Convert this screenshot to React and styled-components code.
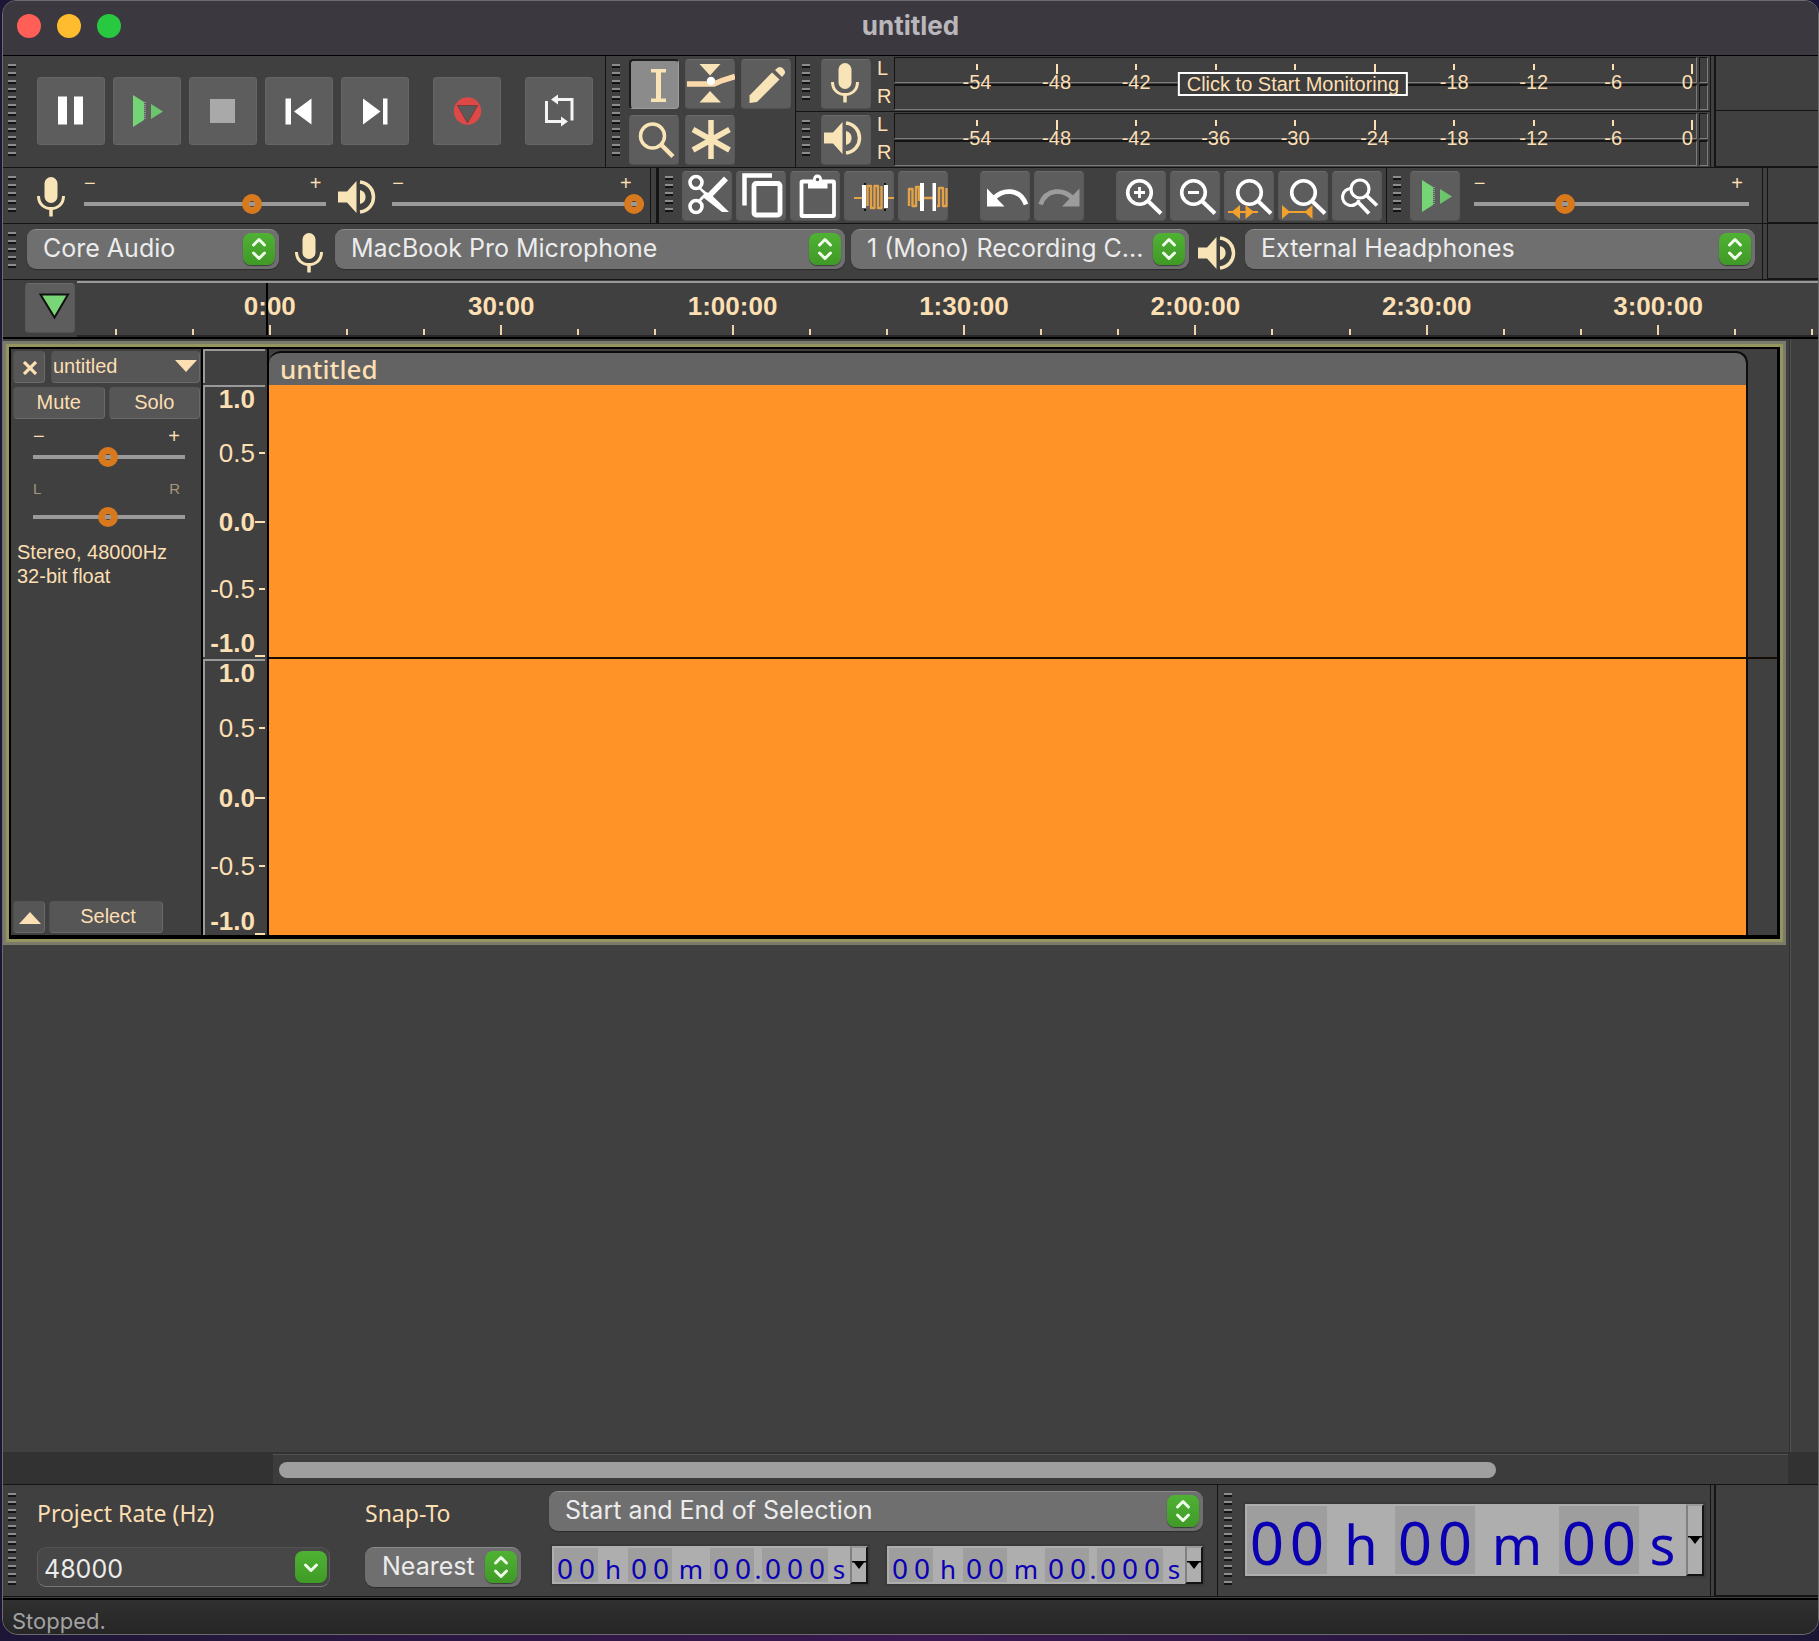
import { useState } from "react";
import styled, { createGlobalStyle, css } from "styled-components";

const GlobalStyle = createGlobalStyle`
  * {
    box-sizing: border-box;
  }
  body {
    margin: 0;
    background: linear-gradient(90deg, #1d1636, #3a1850 50%, #1c1636);
    font-family: "Liberation Sans", Arial, sans-serif;
    font-size: 20px;
    color: #fcdfb2;
  }
  button {
    padding: 0;
    font: inherit;
    color: inherit;
  }
`;

const SYSTEM_FONT = `Inter, "Liberation Sans", sans-serif`;
const HUMANIST_FONT = `"Noto Sans", "Open Sans", sans-serif`;

/* ---------- window ---------- */

const Window = styled.div`
  display: flex;
  flex-direction: column;
  min-height: calc(100vh - 6px);
  margin: 0 0 6px 2px;
  border: 1px solid #6c6b6e;
  border-radius: 14px 14px 16px 16px;
  overflow: hidden;
  background: #404040;
`;

const TitleBar = styled.header`
  display: grid;
  grid-template-columns: 1fr auto 1fr;
  align-items: center;
  height: 55px;
  padding: 0 14px 4px;
  background: #3b383f;
  border-bottom: 1px solid #000;
`;

const Title = styled.h1`
  margin: 0;
  font-family: ${SYSTEM_FONT};
  font-size: 26px;
  line-height: 28px;
  font-weight: 700;
  color: #b9b7bb;
`;

const Lights = styled.div`
  display: flex;
  gap: 16px;
`;

const Light = styled.button`
  width: 24px;
  height: 24px;
  border: 0;
  border-radius: 50%;
  background: ${(p) => p.$color};
`;

/* ---------- toolbars ---------- */

const ToolbarRow = styled.div`
  display: flex;
  height: ${(p) => (p.$tall ? 112 : 56)}px;
  border-bottom: 1px solid #141414;
`;

const Section = styled.section`
  display: flex;
  align-items: flex-start;
  flex: ${(p) => p.$flex || "none"};
  min-width: 0;
  padding: ${(p) => p.$pad};
  border-right: 1px solid #141414;
`;

const Splitter = styled.div`
  flex: none;
  width: ${(p) => p.$width || 5}px;
  border-right: ${(p) => p.$line || 1}px solid #141414;
`;

const Filler = styled.div`
  flex: none;
  width: ${(p) => p.$width}px;
  border-bottom: 1px solid #141414;
`;

const SplitFiller = styled(Filler)`
  display: grid;
  grid-template-rows: 1fr 1fr;

  &::before {
    content: "";
    border-bottom: 1px solid #141414;
  }
`;

const Grabber = styled.div`
  flex: none;
  width: 8px;
  height: ${(p) => (p.$tall ? 92 : 36)}px;
  margin: 8px ${(p) => p.$gap}px 0 0;
  background: repeating-linear-gradient(
    #8c8c8c 0 2px,
    #141414 2px 4px,
    transparent 4px 8px
  );
`;

const TransportButton = styled.button`
  width: 68px;
  height: 68px;
  border: 1px solid #656565;
  border-radius: 3px;
  background: #5d5d5d;

  svg {
    display: block;
    margin: -1px;
  }
`;

const Transport = styled.div`
  display: flex;
  gap: 8px;
  padding-top: 21px;
`;

const Spacer = styled.span`
  width: ${(p) => p.$width}px;
`;

const ToolButton = styled.button`
  flex: none;
  width: 50px;
  height: 50px;
  border: 1px solid;
  border-color: #6a6a6a #585858 #525252 #5a5a5a;
  border-radius: 4px;
  background: #5d5d5d;

  svg {
    display: block;
    margin: -1px;
  }

  ${(p) =>
    p.$pressed &&
    css`
      border-width: 2px 1px 1px 2px;
      border-color: #1c1c1c #9a9a9a #9a9a9a #1c1c1c;
      background: #8b8b8b;

      svg {
        margin: -2px;
      }
    `}
`;

const ToolGrid = styled.div`
  display: grid;
  grid-template-columns: repeat(3, 50px);
  gap: 6px;
  padding-top: 3px;
`;

const ButtonStrip = styled.div`
  display: flex;
  gap: 4px;
  padding-top: 3px;
`;

const IconSlot = styled.span`
  flex: none;
  display: flex;
  align-items: center;
  height: 40px;
  margin: 9px ${(p) => p.$right}px 0 ${(p) => p.$left}px;
`;

/* ---------- meters ---------- */

const Meters = styled.div`
  display: flex;
  flex-direction: column;
  flex: 1;
  min-width: 0;
  border-right: 1px solid #141414;
`;

const MeterRow = styled.div`
  display: flex;
  height: 56px;
  padding: 0 2px 0 6px;
  border-bottom: 1px solid #141414;

  &:last-child {
    height: 55px;
    border-bottom: 0;
  }

  ${ToolButton} {
    margin-top: 3px;
  }
`;

const ChannelNames = styled.div`
  display: grid;
  grid-template-rows: 24px 24px;
  gap: 4px;
  width: 23px;
  padding-left: 6px;
  line-height: 24px;
`;

const MeterBox = styled.div`
  position: relative;
  flex: 1;
  display: grid;
  grid-template-columns: 1fr 9px;
  grid-template-rows: 26px 26px;
  gap: 1px 2px;
  padding-top: 1px;
`;

const MeterBar = styled.div`
  border: 1px solid;
  border-color: #141414 #7c7c7c #7c7c7c #141414;
  border-top-width: ${(p) => (p.$lower ? 2 : 1)}px;
`;

const Mark = styled.div`
  position: absolute;
  top: 8px;
  left: ${(p) => p.$at}%;
  display: flex;
  flex-direction: column;
  align-items: ${(p) => (p.$last ? "flex-end" : "center")};
  width: 0;
  line-height: 20px;

  &::before {
    content: "";
    flex: none;
    width: 2px;
    height: ${(p) => (p.$long ? 10 : 6)}px;
    margin-bottom: ${(p) => (p.$long ? -2 : 2)}px;
    background: #fcdfb2;
  }
`;

const MonitorButton = styled.button`
  position: absolute;
  top: 16px;
  left: 49%;
  height: 24px;
  padding: 0 7px;
  transform: translateX(-50%);
  border: 2px solid #fff;
  background: #3d3d3d;
  line-height: 20px;
  white-space: nowrap;
`;

/* ---------- sliders ---------- */

const SliderBox = styled.div`
  flex: ${(p) => p.$grow || 1} 1 0;
  min-width: 0;
  padding-top: ${(p) => p.$top || 0}px;
`;

const SliderEnds = styled.div`
  display: flex;
  justify-content: space-between;
  height: ${(p) => (p.$pan ? 27 : 20)}px;
  padding-right: ${(p) => p.$inset || 5}px;
  font-size: ${(p) => (p.$pan ? 15 : 20)}px;
  line-height: 20px;
  color: ${(p) => (p.$pan ? "#a8967c" : "inherit")};
`;

const Range = styled.input`
  appearance: none;
  display: block;
  width: 100%;
  height: 22px;
  margin: 0;
  background: transparent;

  &::-webkit-slider-runnable-track {
    height: 4px;
    background: #9a9a9a;
  }

  &::-webkit-slider-thumb {
    appearance: none;
    width: 20px;
    height: 20px;
    margin-top: -8px;
    border: 7px solid #d9791d;
    border-radius: 50%;
    background: transparent;
  }
`;

/* ---------- selects ---------- */

const SelectBox = styled.div`
  position: relative;
  flex: ${(p) => p.$flex || "none"};
  min-width: 0;
  height: 40px;
`;

const NativeSelect = styled.select`
  appearance: none;
  width: 100%;
  height: 40px;
  padding: 0 44px 3px ${(p) => p.$indent || 16}px;
  border: 0;
  border-top: 1px solid #8c8c8c;
  border-radius: 9px;
  background: #6f6f6f;
  box-shadow: 0 1px 1px #2c2c2c;
  font-family: ${SYSTEM_FONT};
  font-size: 25px;
  color: #ececec;
`;

const GreenBadge = styled.span`
  position: absolute;
  top: 4px;
  right: ${(p) => p.$right || 4}px;
  width: 32px;
  height: 32px;
  border-radius: 8px;
  background: linear-gradient(#4fb234, #3f9a26);
  box-shadow: 0 1px 1px #3b3b3b;
  pointer-events: none;

  svg {
    display: block;
  }
`;

/* ---------- timeline ---------- */

const Timeline = styled.div`
  display: flex;
  height: 59px;
  padding-top: 1px;
  border-bottom: 2px solid #000;
`;

const PinCell = styled.div`
  flex: none;
  width: 74px;
  padding: 2px 0 0 22px;
`;

const Ticks = styled.div`
  flex: 1;
  display: flex;
  min-width: 0;
  overflow: hidden;
  border-top: 2px solid #9a9a9a;
  border-bottom: 2px solid #262626;
`;

const TickCell = styled.div`
  position: relative;
  flex: 0 0 4.43%;
  display: flex;
  flex-direction: column;
  align-items: center;
  min-width: 0;
  padding-top: 8px;
  font-size: 26px;
  font-weight: 700;
  line-height: 30px;
  white-space: nowrap;

  &::after {
    content: "";
    width: 2px;
    height: ${(p) => (p.$major ? 10 : 6)}px;
    margin-top: auto;
    background: #f0d5aa;
  }
`;

const Playhead = styled.span`
  position: absolute;
  top: 0;
  bottom: 0;
  left: calc(50% - 4px);
  width: 2px;
  background: #000;
`;

/* ---------- track ---------- */

const Workspace = styled.main`
  flex: 1;
  display: flex;
`;

const TrackList = styled.div`
  flex: 1;
  min-width: 0;
  padding: 2px 4px 24px 0;
`;

const VerticalScroll = styled.div`
  width: 28px;
  border-left: 1px solid #515151;
  box-shadow: -1px 0 0 #303030;
  background: #3e3e3e;
`;

const Track = styled.article`
  padding: 3px;
  border: 3px solid #7b7b6c;
  background: #95955f;
`;

const TrackBody = styled.div`
  display: flex;
  border: 2px solid #000;
  border-width: 2px 3px 4px 2px;
  background: #404040;
`;

const TrackPanel = styled.div`
  display: flex;
  flex-direction: column;
  gap: 4px;
  width: 192px;
  padding: 2px 1px 2px 2px;
  border-right: 2px solid #000;
`;

const PanelRow = styled.div`
  display: flex;
  gap: ${(p) => p.$gap || 4}px;
`;

const PanelButton = styled.button`
  display: flex;
  align-items: center;
  justify-content: ${(p) => (p.$split ? "space-between" : "center")};
  flex: ${(p) => (p.$width ? "none" : "1")};
  width: ${(p) => (p.$width ? `${p.$width}px` : "auto")};
  height: 32px;
  padding: ${(p) => p.$pad || "0 0 2px"};
  border: 1px solid;
  border-color: #565656 #696969 #696969 #505050;
  border-radius: 4px;
  background: #565656;
  line-height: 24px;
`;

const PanelSliders = styled.div`
  display: flex;
  flex-direction: column;
  gap: 11px;
  width: 172px;
  padding: 3px 0 0 20px;
`;

const TrackInfo = styled.p`
  margin: 8px 0 auto;
  padding-left: 4px;
  line-height: 24px;
`;

const LevelRuler = styled.div`
  display: flex;
  flex-direction: column;
  width: 62px;
`;

const RulerHead = styled.div`
  height: 34px;
  margin-bottom: 2px;
  border-top: 2px solid #9a9a9a;
  border-left: 2px solid #9a9a9a;
`;

const RulerChannel = styled.div`
  display: grid;
  grid-template-rows: 24px 83fr 53fr 80fr 28px;
  height: ${(p) => p.$height}px;
  border-top: 2px solid #9a9a9a;
  border-left: 2px solid #9a9a9a;

  & + & {
    margin-top: 2px;
  }
`;

const Level = styled.div`
  display: flex;
  align-items: center;
  justify-content: flex-end;
  font-size: 26px;
  line-height: 24px;
  font-weight: ${(p) => (p.$bold ? 700 : 400)};

  &::after {
    content: "";
    align-self: ${(p) => (p.$end ? "flex-end" : "center")};
    width: ${(p) => (p.$bold ? 10 : 6)}px;
    height: ${(p) => (p.$tick ? 2 : 0)}px;
    margin-left: ${(p) => (p.$bold ? 0 : 4)}px;
    background: #fcdfb2;
  }
`;

const ClipArea = styled.div`
  flex: 1;
  min-width: 0;
  margin-left: 2px;
  padding-top: 2px;
  border-left: 2px solid #000;
  background: #404040;
`;

const ClipHeader = styled.div`
  height: 34px;
  margin-right: 29px;
  padding: 0 11px;
  border-top: 2px solid #0c0c0c;
  border-right: 2px solid #0c0c0c;
  border-radius: 12px 12px 0 0;
  background: #636363;
  font-family: ${HUMANIST_FONT};
  font-size: 26px;
  font-weight: 500;
  line-height: 32px;
`;

const WaveRow = styled.div`
  height: ${(p) => p.$height}px;
  padding-right: 29px;

  & + & {
    border-top: 2px solid #140b02;
  }
`;

const Wave = styled.div`
  height: 100%;
  border-right: 2px solid #0c0c0c;
  background: #ff9328;
`;

/* ---------- bottom ---------- */

const ScrollRow = styled.div`
  display: flex;
  height: 33px;
  padding: 0 30px 0 270px;
  border-bottom: 1px solid #141414;
  background: #323232;
`;

const ScrollTrack = styled.div`
  flex: 1;
  margin-top: 2px;
  padding: 7px 6px 0;
  border-top: 1px solid #525252;
  background: #3c3c3c;
`;

const ScrollThumb = styled.div`
  width: 81%;
  height: 16px;
  border-radius: 8px;
  background: #9f9f9f;
`;

const SelectionRow = styled.div`
  display: flex;
  height: 112px;
  border-bottom: 1px solid #141414;
`;

const Field = styled.div`
  display: flex;
  flex-direction: column;
  flex: ${(p) => p.$flex || "none"};
  gap: ${(p) => p.$gap || 12}px;
  width: ${(p) => (p.$width ? `${p.$width}px` : "auto")};
  margin-right: ${(p) => p.$right}px;
  padding-top: 6px;
`;

const FieldLabel = styled.label`
  height: 44px;
  font-family: ${HUMANIST_FONT};
  font-size: 23px;
  line-height: 44px;
`;

const RateBox = styled.div`
  position: relative;
`;

const RateInput = styled.input`
  display: block;
  width: 100%;
  height: 40px;
  padding: 4px 44px 0 6px;
  border: 1px solid;
  border-color: #525252 #5c5c5c #777;
  border-radius: 9px;
  background: #474747;
  font-family: ${SYSTEM_FONT};
  font-size: 25px;
  color: #ececec;
`;

const TimePair = styled.div`
  display: flex;
  justify-content: space-between;
  padding-left: 3px;
`;

const TimeBox = styled.div`
  display: flex;
  align-items: stretch;
  flex: none;
  height: ${(p) => (p.$big ? 72 : 38)}px;
  margin-top: ${(p) => (p.$big ? 19 : 0)}px;
  padding-left: 2px;
  background: #aeaeae;
  box-shadow: 0 0 0 2px #3a3a3a;
  font-family: ${HUMANIST_FONT};
  font-size: ${(p) => (p.$big ? 60 : 28)}px;
  color: #0a00b2;
`;

const Digits = styled.span`
  display: grid;
  grid-auto-flow: column;
  grid-auto-columns: ${(p) => (p.$big ? 40 : 22)}px;
  margin: 2px 0;
  background: #9e9e9e;
  line-height: ${(p) => (p.$big ? 72 : 41)}px;
  text-align: center;
`;

const Unit = styled.span`
  width: ${(p) => p.$width}px;
  margin: 2px 0;
  font-size: ${(p) => (p.$big ? 54 : 26)}px;
  line-height: ${(p) => (p.$big ? 76 : 42)}px;
  text-align: center;
`;

const TimeMenu = styled.button`
  display: flex;
  align-items: center;
  justify-content: center;
  width: 18px;
  border: 2px solid;
  border-color: #9a9a9a #141414 #141414 #808080;
  background: #aeaeae;
`;

const StatusBar = styled.footer`
  height: 36px;
  padding: 0 9px;
  border-top: 2px solid #000;
  background: linear-gradient(#303030, #262626);
  font-family: ${SYSTEM_FONT};
  font-size: 22px;
  line-height: 42px;
  color: #a2a2a2;
`;

const StatusGap = styled.div`
  height: 1px;
  background: #404040;
`;

/* ---------- icons ---------- */

const CREAM = "#f8e4b6";

const Svg = ({ w = 50, h = 50, children }) => (
  <svg width={w} height={h} viewBox={`0 0 ${w} ${h}`} fill="none" aria-hidden="true">
    {children}
  </svg>
);

const MicShape = () => (
  <>
    <rect x="7.5" y="0" width="13" height="26" rx="6.5" fill={CREAM} />
    <path d="M1.5 19C1.5 27 7 31.5 14 31.5S26.5 27 26.5 19" stroke={CREAM} strokeWidth="3" />
    <path d="M14 31V39.5" stroke={CREAM} strokeWidth="3.5" />
  </>
);

const SpeakerShape = () => (
  <>
    <path d="M0 11.5H9L18.5 1V33L9 22.5H0Z" fill={CREAM} />
    <path d="M22 10C29.5 11.5 29.5 22.5 22 24Z" fill={CREAM} />
    <path d="M22 2C40 4.5 40 29.5 22 32" stroke={CREAM} strokeWidth="3.5" />
  </>
);

const MicIcon = () => (
  <Svg w={28} h={40}>
    <MicShape />
  </Svg>
);

const SpeakerIcon = () => (
  <Svg w={38} h={34}>
    <SpeakerShape />
  </Svg>
);

const PlayShape = () => (
  <>
    <path d="M0 0L11 7V25L0 32Z" fill="#74d476" />
    <path d="M12 7V25" stroke="#b9d8b9" strokeDasharray="1 1" />
    <path d="M18 9L30 16.5L18 24Z" fill="#6cc56c" />
  </>
);

const Lens = ({ x = 23.5, children }) => (
  <>
    <circle cx={x} cy="21.5" r="11.8" stroke="#fff" strokeWidth="3.6" />
    <path d={`M${x + 8.5} 30L${x + 21.5} 42.5`} stroke="#fff" strokeWidth="4" />
    {children}
  </>
);

const UpDown = () => (
  <Svg w={32} h={32}>
    <path
      d="M10.5 12L16 6.500L21.5 12M10.5 20L16 25.5L21.5 20"
      stroke="#eefbe9"
      strokeWidth="3"
      strokeLinecap="round"
      strokeLinejoin="round"
    />
  </Svg>
);

const Triangle = ({ up }) => (
  <Svg w={22} h={12}>
    <path d={up ? "M0 12L11 0L22 12Z" : "M0 0H22L11 12Z"} fill="#fcdfb2" />
  </Svg>
);

const transportIcons = {
  Pause: <path d="M21 19.5H30V47.5H21ZM37 19.5H46V47.5H37Z" fill="#fff" />,
  Play: (
    <g transform="translate(20 18)">
      <PlayShape />
    </g>
  ),
  Stop: <path d="M21 22H46V46H21Z" fill="#a9a9a9" />,
  "Skip to Start": <path d="M20.5 21.5H26V47.5H20.5ZM46.5 21.5V47.5L29 34.5Z" fill="#fff" />,
  "Skip to End": <path d="M22 21.5V47.5L39.5 34.5ZM42 21.5H46.5V47.5H42Z" fill="#fff" />,
  Record: (
    <>
      <circle cx="34.5" cy="34" r="13.7" fill="#dd4947" />
      <path d="M24.5 28.5H44.5L34.5 46Z" fill="#5a5a5a" stroke="#7b3a38" />
    </>
  ),
  Loop: (
    <>
      <path d="M21.5 24V44.5H38M47 43.5V22.5H31" stroke="#f4f4f4" strokeWidth="3" />
      <path d="M26 22.5L33 17.5V27.5ZM43 44.5L36 39.5V49.5Z" fill="#f4f4f4" />
    </>
  ),
};

const tools = [
  {
    name: "Selection Tool",
    pressed: true,
    icon: <path d="M22 9H37V12.5H32V38.500H37V42H22V38.500H27V12.5H22Z" fill={CREAM} />,
  },
  {
    name: "Envelope Tool",
    icon: (
      <>
        <path d="M14.5 5H35.5L25 16.5ZM14.5 43.5H36L25 32Z" fill={CREAM} />
        <path d="M2 25H29L37 21.5L50 17.5" stroke="#fbd9aa" strokeWidth="5.5" />
        <circle cx="26" cy="22" r="4.2" fill="#fff" />
      </>
    ),
  },
  {
    name: "Draw Tool",
    icon: (
      <>
        <path d="M8.5 44V36.5L31 13.5L38.5 20.5L16 43Z" fill={CREAM} />
        <path d="M34 11L37 8.5Q40 7 42.5 10T43.5 15L41 18Z" fill={CREAM} />
      </>
    ),
  },
  {
    name: "Zoom Tool",
    icon: (
      <>
        <circle cx="23.5" cy="21" r="12" stroke={CREAM} strokeWidth="3.5" />
        <path d="M32.5 30L44 41.5" stroke={CREAM} strokeWidth="4.5" />
      </>
    ),
  },
  {
    name: "Multi-Tool",
    icon: <path d="M26 5V44M8 14.5L44.5 35M44.5 14.5L8 35" stroke={CREAM} strokeWidth="5.5" />,
  },
];

const AMBER = "#e2a24a";

const editGroups = [
  {
    Cut: (
      <>
        <circle cx="14" cy="11.5" r="6" stroke="#fff" strokeWidth="3.6" />
        <circle cx="14" cy="35.5" r="6" stroke="#fff" strokeWidth="3.6" />
        <path d="M18 16L24 21L28 22.5L47 41H40L22 27L18 31L17 28L22 23L17 18Z" fill="#fff" />
        <path d="M28 24L44 7.5" stroke="#fff" strokeWidth="5.5" />
      </>
    ),
    Copy: (
      <>
        <path d="M36 4.5H8.5V34.5" stroke="#fff" strokeWidth="4.5" />
        <rect x="18" y="12.5" width="26" height="31.5" rx="2" stroke="#fff" strokeWidth="4.8" />
      </>
    ),
    Paste: (
      <>
        <rect x="11.5" y="10.5" width="32.5" height="34.5" rx="1" stroke="#fff" strokeWidth="3.8" />
        <path d="M18 17.5V9H23Q23 3.5 27.5 3.5T32 9H37.5V17.5Z" fill="#fff" />
        <circle cx="27.5" cy="8.5" r="1.7" fill="#555" />
      </>
    ),
    Trim: (
      <>
        <path d="M10 27H18M43 27H50" stroke={AMBER} strokeWidth="2" />
        <path
          d="M23.5 35V15H27V37H30.5V15H34V37H37.500V15"
          stroke={AMBER}
          strokeWidth="2.4"
          strokeLinejoin="round"
        />
        <path d="M18 14H22V37H18ZM40 14H44V37H40Z" fill="#fff" />
        <path d="M20 12H22V14H20ZM40 12H42V14H40ZM20 38H22V40H20ZM40 38H42V40H40Z" fill="#111" />
      </>
    ),
    Silence: (
      <>
        <path
          d="M11 35V18H14.5V35H18V16H21V30M26 27H35M39 35H41V17H45V35H48.500V17"
          stroke={AMBER}
          strokeWidth="2.4"
          strokeLinejoin="round"
        />
        <path d="M22 12H26V40H22ZM34.5 12H38V40H34.5Z" fill="#fff" />
      </>
    ),
  },
  {
    Undo: (
      <>
        <path d="M7 17.5V35.5H24.5Z" fill="#fff" />
        <path d="M14 27C23 18 40 17 46 33.5" stroke="#fff" strokeWidth="4.8" />
      </>
    ),
    Redo: (
      <>
        <path d="M45.5 17.5V35.5H28Z" fill="#9c9c9c" />
        <path d="M38.5 27C29.5 18 12.5 17 6.5 33.5" stroke="#9c9c9c" strokeWidth="4.8" />
      </>
    ),
  },
  {
    "Zoom In": (
      <Lens>
        <path d="M18 21.5H29M23.5 16V27" stroke="#fff" strokeWidth="2.8" />
      </Lens>
    ),
    "Zoom Out": (
      <Lens>
        <path d="M18 21.5H29" stroke="#fff" strokeWidth="2.8" />
      </Lens>
    ),
    "Fit Selection": (
      <Lens x={25.5}>
        <path d="M4 41H34" stroke="#f2a02e" strokeWidth="2" />
        <path d="M7.5 41L16 34V48ZM30 41L21.5 34V48Z" fill="#f2a02e" />
      </Lens>
    ),
    "Fit Project": (
      <Lens x={25.5}>
        <path d="M5 41H34" stroke="#f2a02e" strokeWidth="2" />
        <path d="M4 34L12 41L4 48ZM34.5 34L26.5 41L34.5 48Z" fill="#f2a02e" />
      </Lens>
    ),
    "Zoom Toggle": (
      <>
        <circle cx="28" cy="18" r="9" stroke="#fff" strokeWidth="3.2" />
        <path d="M19 17.5A8.5 8.5 0 1 0 27 29" stroke="#fff" strokeWidth="3.2" />
        <path d="M34 24L45 34.5M26 31L37 42.5" stroke="#fff" strokeWidth="3.8" />
      </>
    ),
  },
];

/* ---------- parts ---------- */

const Dropdown = ({ label, value, flex, indent, id }) => (
  <SelectBox $flex={flex}>
    <NativeSelect id={id} aria-label={label} $indent={indent} defaultValue={value}>
      <option>{value}</option>
    </NativeSelect>
    <GreenBadge>
      <UpDown />
    </GreenBadge>
  </SelectBox>
);

const Slider = ({ label, start, ends = ["−", "+"], pan, inset, top, grow }) => {
  const [value, setValue] = useState(start);
  return (
    <SliderBox $top={top} $grow={grow}>
      <SliderEnds $pan={pan} $inset={inset}>
        <span>{ends[0]}</span>
        <span>{ends[1]}</span>
      </SliderEnds>
      <Range
        type="range"
        aria-label={label}
        value={value}
        onChange={(e) => setValue(Number(e.target.value))}
      />
    </SliderBox>
  );
};

const levels = [-54, -48, -42, -36, -30, -24, -18, -12, -6, 0];

const Meter = ({ name, icon, monitoring }) => (
  <MeterRow>
    <Grabber $gap={11} />
    <ToolButton aria-label={name}>
      <Svg>{icon}</Svg>
    </ToolButton>
    <ChannelNames>
      <span>L</span>
      <span>R</span>
    </ChannelNames>
    <MeterBox>
      <MeterBar />
      <MeterBar />
      <MeterBar $lower />
      <MeterBar $lower />
      {levels.map((db, i) => (
        <Mark key={db} $at={10.2 + i * 9.77} $long={db % 24 === 0} $last={db === 0}>
          {monitoring && db > -42 && db < -18 ? null : db}
        </Mark>
      ))}
      {monitoring && <MonitorButton>Click to Start Monitoring</MonitorButton>}
    </MeterBox>
  </MeterRow>
);

const timelineLabels = {
  2: "0:00",
  5: "30:00",
  8: "1:00:00",
  11: "1:30:00",
  14: "2:00:00",
  17: "2:30:00",
  20: "3:00:00",
};

const LevelScale = ({ height }) => (
  <RulerChannel $height={height}>
    <Level $bold>1.0</Level>
    <Level $tick>0.5</Level>
    <Level $bold $tick>
      0.0
    </Level>
    <Level $tick>-0.5</Level>
    <Level $bold $tick $end>
      -1.0
    </Level>
  </RulerChannel>
);

const TimeControl = ({ label, parts, big }) => (
  <TimeBox role="group" aria-label={label} $big={big}>
    {parts.map(([text, width], i) =>
      width ? (
        <Unit key={i} $width={width} $big={big}>
          {text}
        </Unit>
      ) : (
        <Digits key={i} $big={big}>
          {text.split("").map((digit, n) => (
            <span key={n}>{digit}</span>
          ))}
        </Digits>
      )
    )}
    <TimeMenu aria-label={`${label} format`}>
      <Svg w={14} h={8}>
        <path d="M0 0H14V1.5H12L7 8L2 1.5H0Z" fill="#000" />
      </Svg>
    </TimeMenu>
  </TimeBox>
);

const smallTime = [["00"], ["h", 30], ["00"], ["m", 38], ["00"], [".", 8], ["000"], ["s", 22]];
const bigTime = [["00"], ["h", 68], ["00"], ["m", 84], ["00"], ["s", 47]];

const DeviceBar = styled.div`
  display: flex;
  flex: 1;
  min-width: 0;

  & > ${SelectBox} {
    margin-top: 5px;
  }
`;

const DeviceRow = () => (
  <DeviceBar>
    <Dropdown label="Audio Host" value="Core Audio" flex="252 1 0" />
    <IconSlot $left={16} $right={12}>
      <MicIcon />
    </IconSlot>
    <Dropdown label="Recording Device" value="MacBook Pro Microphone" flex="510 1 0" />
    <Spacer $width={6} />
    <Dropdown label="Recording Channels" value="1 (Mono) Recording C..." flex="338 1 0" />
    <IconSlot $left={9} $right={9}>
      <SpeakerIcon />
    </IconSlot>
    <Dropdown label="Playback Device" value="External Headphones" flex="510 1 0" />
  </DeviceBar>
);

const App = () => (
  <>
    <GlobalStyle />
    <Window>
      <TitleBar>
        <Lights>
          <Light $color="#ff5f57" aria-label="Close" />
          <Light $color="#febc2e" aria-label="Minimize" />
          <Light $color="#28c840" aria-label="Zoom" />
        </Lights>
        <Title>untitled</Title>
      </TitleBar>

      <ToolbarRow $tall>
        <Section $pad="0 12px 0 5px">
          <Grabber $tall $gap={21} />
          <Transport>
            {Object.entries(transportIcons).map(([name, icon]) => [
              (name === "Record" || name === "Loop") && <Spacer key={`${name}-gap`} $width={8} />,
              <TransportButton key={name} aria-label={name}>
                <Svg w={68} h={68}>
                  {icon}
                </Svg>
              </TransportButton>,
            ])}
          </Transport>
        </Section>
        <Section $pad="0 4px 0 6px">
          <Grabber $tall $gap={9} />
          <ToolGrid>
            {tools.map((tool) => (
              <ToolButton key={tool.name} aria-label={tool.name} $pressed={tool.pressed}>
                <Svg>{tool.icon}</Svg>
              </ToolButton>
            ))}
          </ToolGrid>
        </Section>
        <Meters>
          <Meter
            name="Record Meter"
            monitoring
            icon={
              <g transform="translate(10 4)">
                <MicShape />
              </g>
            }
          />
          <Meter
            name="Playback Meter"
            icon={
              <g transform="translate(3 6)">
                <SpeakerShape />
              </g>
            }
          />
        </Meters>
        <Splitter $line={2} />
        <SplitFiller $width={102} />
      </ToolbarRow>

      <ToolbarRow>
        <Section $flex="635 1 0" $pad="0 6px 0 5px">
          <Grabber $gap={21} />
          <IconSlot $left={0} $right={19}>
            <MicIcon />
          </IconSlot>
          <Slider label="Recording Volume" start={71} top={5} grow={242} />
          <IconSlot $left={12} $right={16}>
            <SpeakerIcon />
          </IconSlot>
          <Slider label="Playback Volume" start={100} inset={12} top={5} grow={251} />
        </Section>
        <Splitter $width={8} $line={3} />
        <Section $pad="0 4px 0 6px">
          <Grabber $gap={9} />
          <ButtonStrip>
            {editGroups.map((group, i) => [
              i > 0 && <Spacer key={i} $width={24} />,
              Object.entries(group).map(([name, icon]) => (
                <ToolButton key={name} aria-label={name}>
                  <Svg>{icon}</Svg>
                </ToolButton>
              )),
            ])}
          </ButtonStrip>
        </Section>
        <Section $flex="356 1 0" $pad="0 13px 0 6px">
          <Grabber $gap={9} />
          <ButtonStrip>
            <ToolButton aria-label="Play-at-Speed">
              <Svg>
                <g transform="translate(12 9)">
                  <PlayShape />
                </g>
              </Svg>
            </ToolButton>
            <Spacer $width={10} />
          </ButtonStrip>
          <Slider label="Playback Speed" start={32} top={5} inset={6} />
        </Section>
        <Splitter />
        <Filler $width={50} />
      </ToolbarRow>

      <ToolbarRow>
        <Section $flex="1" $pad="0 7px 0 5px">
          <Grabber $gap={11} />
          <DeviceRow />
        </Section>
        <Splitter />
        <Filler $width={50} />
      </ToolbarRow>

      <Timeline>
        <PinCell>
          <ToolButton aria-label="Timeline Options">
            <Svg>
              <path
                d="M15.5 11.5H43L29.5 34.5Z"
                fill="#79d677"
                stroke="#111"
                strokeWidth="2"
              />
            </Svg>
          </ToolButton>
        </PinCell>
        <Ticks>
          {Array.from({ length: 23 }, (_, i) => (
            <TickCell key={i} $major={i in timelineLabels}>
              {timelineLabels[i]}
              {i === 2 && <Playhead />}
            </TickCell>
          ))}
        </Ticks>
      </Timeline>

      <Workspace>
        <TrackList>
          <Track>
            <TrackBody>
              <TrackPanel>
                <PanelRow $gap={6}>
                  <PanelButton $width={32} $pad="2px 0 0 2px" aria-label="Close track">
                    <Svg w={14} h={14}>
                      <path d="M1 1L13 13M13 1L1 13" stroke="#fcdfb2" strokeWidth="3.2" />
                    </Svg>
                  </PanelButton>
                  <PanelButton $split $pad="0 2px 2px 1px">
                    untitled
                    <Triangle />
                  </PanelButton>
                </PanelRow>
                <PanelRow>
                  <PanelButton>Mute</PanelButton>
                  <PanelButton>Solo</PanelButton>
                </PanelRow>
                <PanelSliders>
                  <Slider label="Gain" start={49} />
                  <Slider label="Pan" start={49} ends={["L", "R"]} pan />
                </PanelSliders>
                <TrackInfo>
                  Stereo, 48000Hz
                  <br />
                  32-bit float
                </TrackInfo>
                <PanelRow>
                  <PanelButton $width={32} $pad="2px 0 0 2px" aria-label="Collapse">
                    <Triangle up />
                  </PanelButton>
                  <PanelButton $width={114} $pad="0 0 2px 4px">
                    Select
                  </PanelButton>
                </PanelRow>
              </TrackPanel>
              <LevelRuler>
                <RulerHead />
                <LevelScale height={272} />
                <LevelScale height={276} />
              </LevelRuler>
              <ClipArea>
                <ClipHeader>untitled</ClipHeader>
                <WaveRow $height={272}>
                  <Wave />
                </WaveRow>
                <WaveRow $height={278}>
                  <Wave />
                </WaveRow>
              </ClipArea>
            </TrackBody>
          </Track>
        </TrackList>
        <VerticalScroll />
      </Workspace>

      <ScrollRow>
        <ScrollTrack>
          <ScrollThumb />
        </ScrollTrack>
      </ScrollRow>

      <SelectionRow>
        <Section $flex="1" $pad="0 14px 0 5px">
          <Grabber $tall $gap={21} />
          <Field $width={293} $right={35}>
            <FieldLabel htmlFor="rate">Project Rate (Hz)</FieldLabel>
            <RateBox>
              <RateInput id="rate" defaultValue="48000" />
              <GreenBadge $right={3}>
                <Svg w={32} h={32}>
                  <path
                    d="M10.5 14L16 19.5L21.5 14"
                    stroke="#eefbe9"
                    strokeWidth="3"
                    strokeLinecap="round"
                    strokeLinejoin="round"
                  />
                </Svg>
              </GreenBadge>
            </RateBox>
          </Field>
          <Field $width={156} $right={28}>
            <FieldLabel htmlFor="snap">Snap-To</FieldLabel>
            <Dropdown id="snap" value="Nearest" indent={17} />
          </Field>
          <Field $flex="1" $right={0} $gap={15}>
            <Dropdown label="Selection mode" value="Start and End of Selection" />
            <TimePair>
              <TimeControl label="Selection start" parts={smallTime} />
              <TimeControl label="Selection end" parts={smallTime} />
            </TimePair>
          </Field>
        </Section>
        <Section $pad="0 6px 0 6px">
          <Grabber $tall $gap={13} />
          <TimeControl label="Audio position" parts={bigTime} big />
        </Section>
        <Splitter $line={2} />
        <Filler $width={102} />
      </SelectionRow>

      <StatusGap />
      <StatusBar>Stopped.</StatusBar>
    </Window>
  </>
);

export default App;
